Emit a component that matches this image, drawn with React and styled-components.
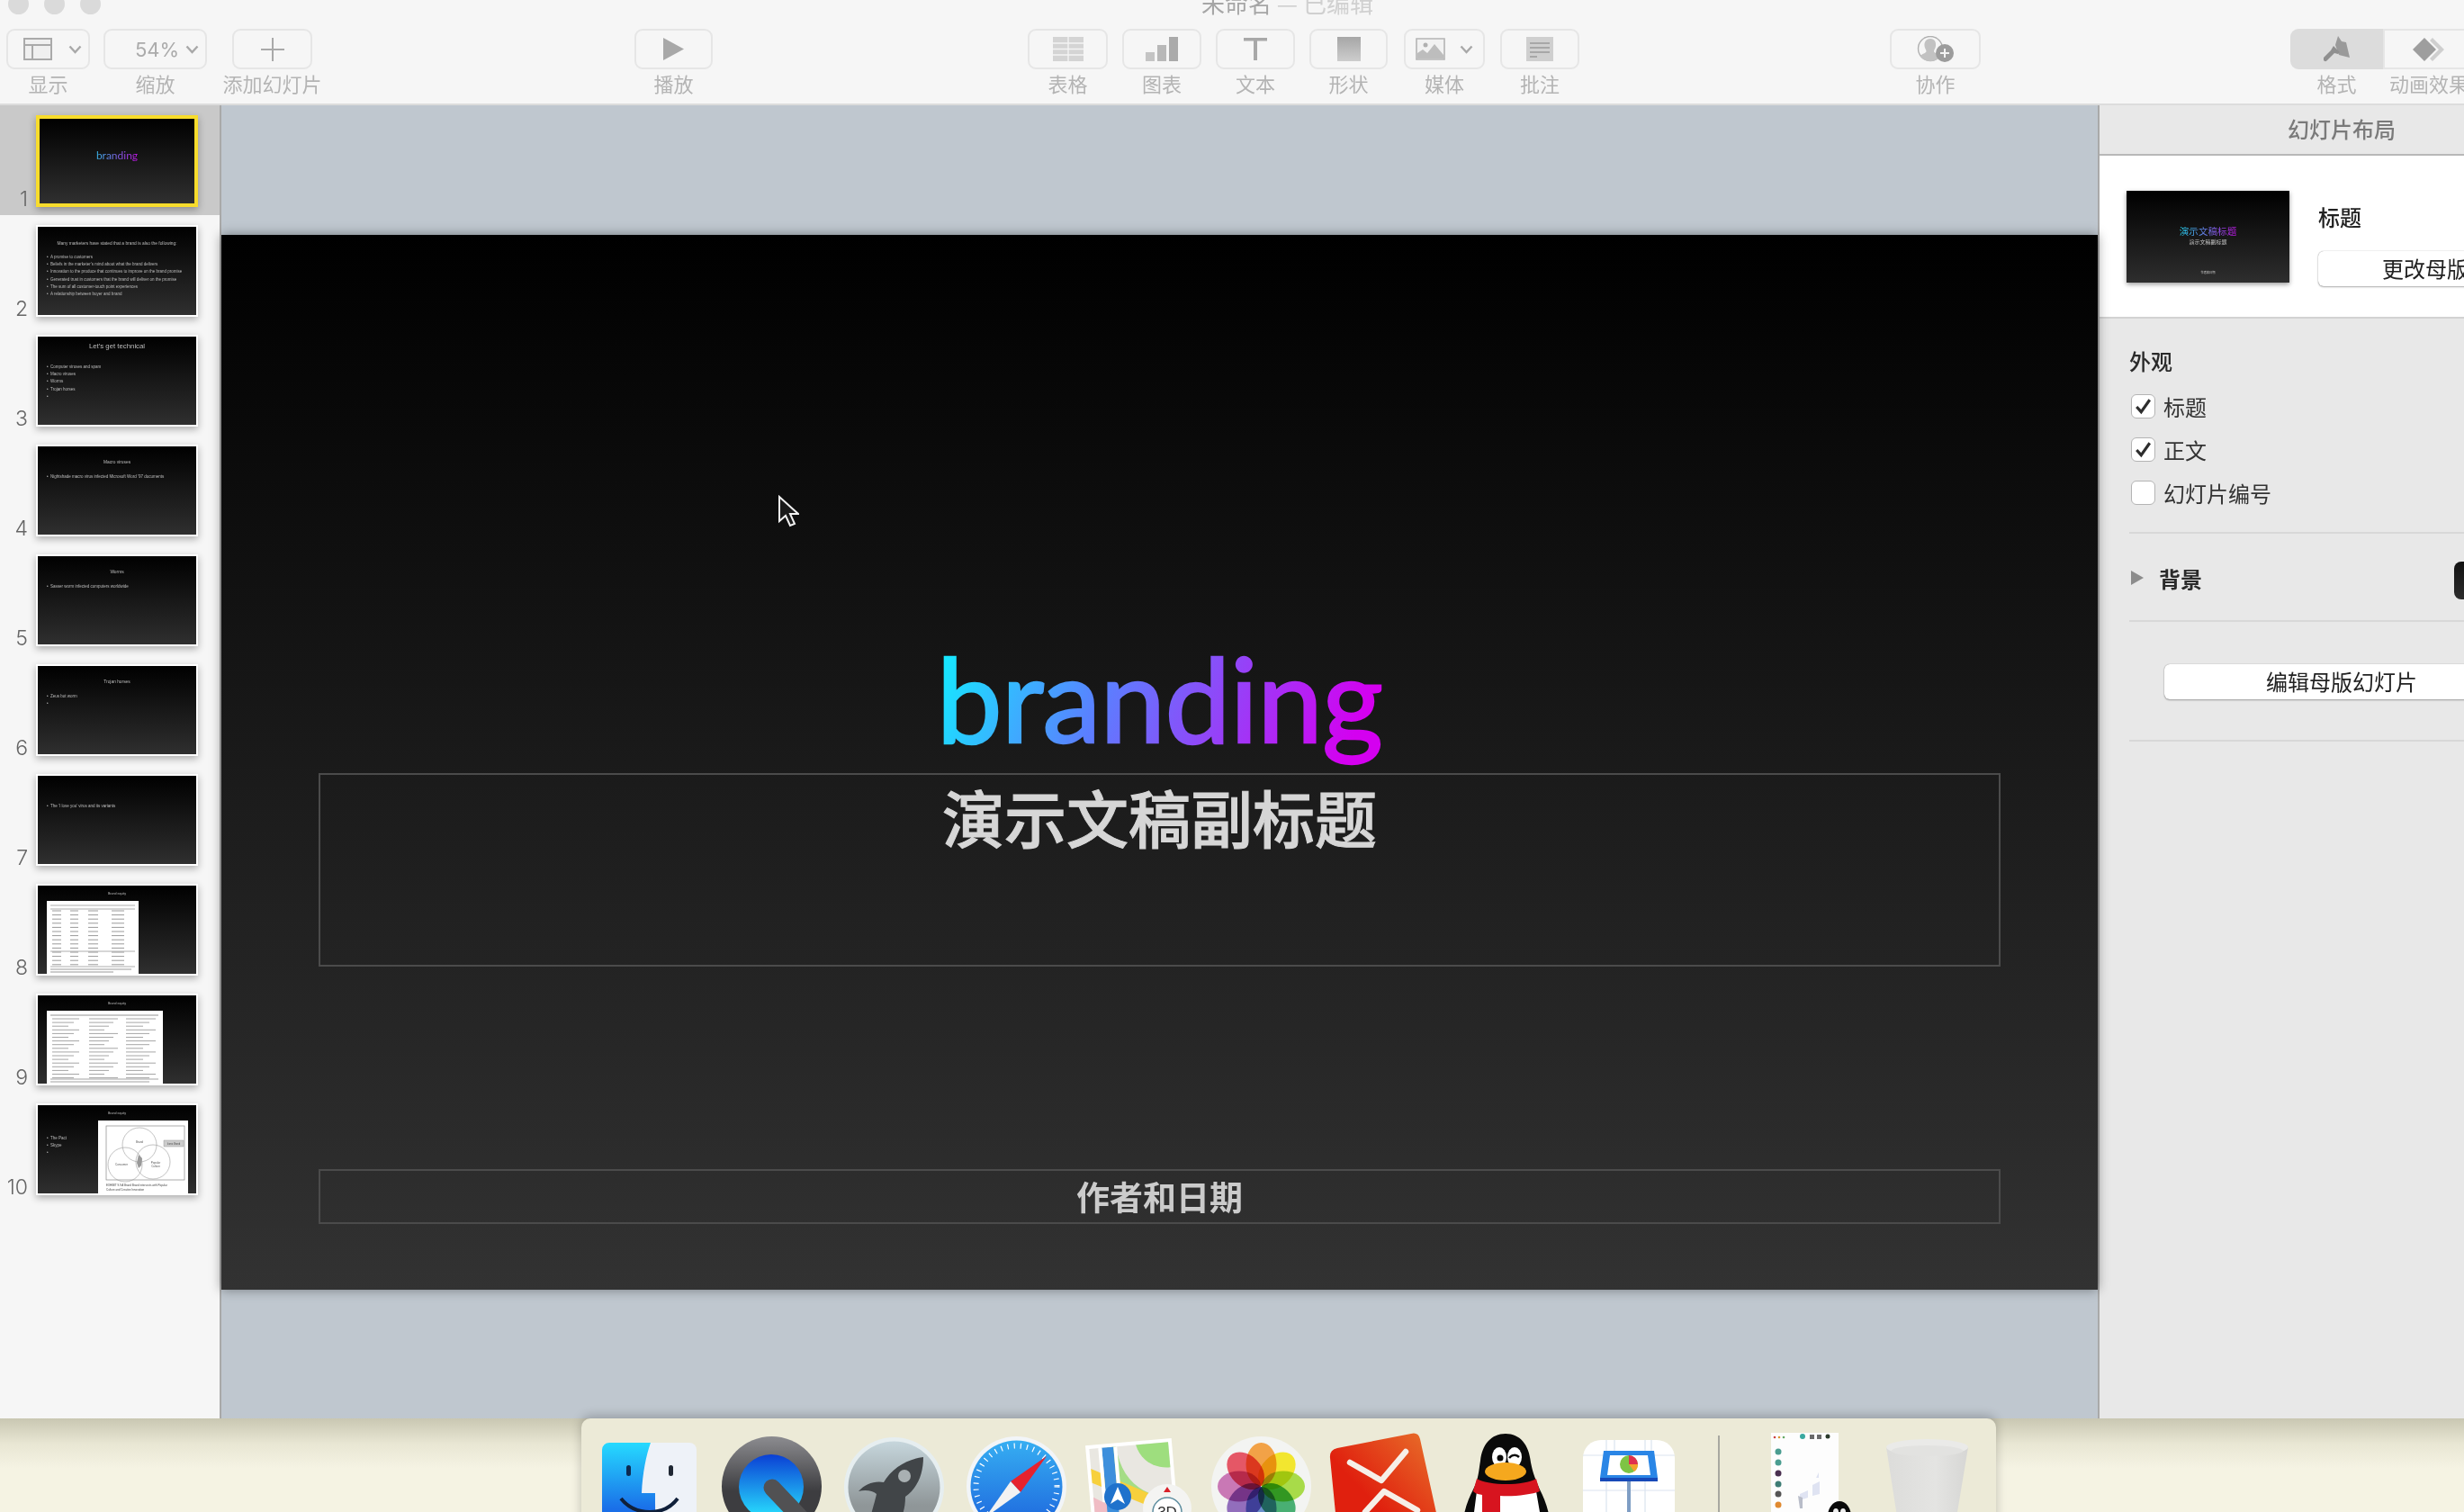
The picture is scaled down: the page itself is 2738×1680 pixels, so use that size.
import React from 'react';
import styled, {createGlobalStyle} from 'styled-components';

const CJK = '"Noto Sans CJK SC", "Liberation Sans", sans-serif';

const GlobalStyle = createGlobalStyle`
  html, body { margin: 0; padding: 0; background: #f4f2e2; }
  * { box-sizing: border-box; }
`;

const Screen = styled.div`
  width: 2738px;
  height: 1680px;
  overflow: hidden;
  font-family: ${CJK};
  display: flex;
  flex-direction: column;
`;

const Window = styled.div`
  height: 1576px;
  flex: none;
  display: flex;
  flex-direction: column;
  background: #f6f6f6;
`;

const TitleBar = styled.div`
  height: 32px;
  flex: none;
  position: relative;
  overflow: hidden;
  display: flex;
  align-items: flex-start;
  padding-left: 9px;
  gap: 17px;
`;

const Light = styled.span`
  width: 23px;
  height: 23px;
  margin-top: -7px;
  border-radius: 50%;
  background: #dadada;
`;

const DocTitle = styled.div`
  position: absolute;
  left: 1335px;
  top: -15px;
  font-size: 26px;
  line-height: 36px;
  white-space: nowrap;
  color: #a6a6a6;
  span { color: #d0d0d0; }
`;

const Toolbar = styled.div`
  height: 85px;
  flex: none;
  display: flex;
  align-items: flex-start;
  border-bottom: 2px solid #dcdcdc;
`;

const ToolItem = styled.div`
  width: ${p => p.$w}px;
  margin-left: ${p => p.$ml}px;
  flex: none;
  display: flex;
  flex-direction: column;
  align-items: center;
`;

const ToolButton = styled.div`
  width: 100%;
  height: 45px;
  border: 2px solid #e6e6e6;
  border-radius: 9px;
  padding-left: ${p => p.$pad || 0}px;
  display: flex;
  align-items: center;
  justify-content: center;
  gap: ${p => p.$gap || 0}px;
  color: #ababab;
  font-size: 22px;
  font-family: "Inter", "Liberation Sans", sans-serif;
`;

const SegButton = styled(ToolButton)`
  background: ${p => (p.$active ? '#dcdcdc' : 'transparent')};
  border-radius: ${p => (p.$active ? '9px 0 0 9px' : '0')};
  border-color: ${p => (p.$active ? '#dcdcdc' : '#e6e6e6')};
`;

const ToolLabel = styled.div`
  margin-top: 1px;
  font-size: 22px;
  line-height: 28px;
  color: #b4b4b4;
  white-space: nowrap;
`;

const Main = styled.div`
  flex: 1;
  min-height: 0;
  display: flex;
`;

const Sidebar = styled.div`
  width: 246px;
  flex: none;
  background: #f6f6f6;
  border-right: 2px solid #a9a9a9;
`;

const SlideRow = styled.div`
  height: 122px;
  padding-top: 11px;
  display: flex;
  align-items: flex-start;
  background: ${p => (p.$selected ? '#c9c9c9' : 'transparent')};
`;

const RowNumber = styled.div`
  width: 31px;
  height: 105px;
  flex: none;
  margin-right: 9px;
  display: flex;
  align-items: flex-end;
  justify-content: flex-end;
  font-family: "Inter", "Liberation Sans", sans-serif;
  font-weight: 300;
  font-size: 23px;
  line-height: 23px;
  color: #666;
`;

const Thumb = styled.div`
  width: 180px;
  height: 102px;
  flex: none;
  overflow: hidden;
  border: ${p => (p.$selected ? '4px solid #f8dc2c' : '2px solid #fff')};
  background: linear-gradient(#000, #2f2f2f);
  box-shadow: 0 3px 8px rgba(0, 0, 0, 0.3);
  font-family: "Liberation Sans", sans-serif;
  color: #bcbcbc;
  white-space: nowrap;
`;

const ThumbTitle = styled.div`
  height: 30px;
  padding-top: ${p => p.$top}px;
  text-align: center;
  font-size: ${p => p.$size}px;
  line-height: 10px;
`;

const ThumbBody = styled.div`
  display: flex;
  align-items: flex-start;
  justify-content: space-between;
`;

const Bullets = styled.div`
  padding: ${p => p.$top || 0}px 0 0 10px;
  font-size: 4.5px;
  line-height: 8.2px;
`;

const BulletLine = styled.div`
  display: flex;
  gap: 2.5px;
  height: 8.2px;
`;

const Picture = styled.svg`
  display: block;
  flex: none;
  margin-top: -13px;
  margin-left: ${p => p.$ml || 0}px;
  margin-right: ${p => p.$mr || 0}px;
  background: #fff;
`;

const BrandTiny = styled.div`
  padding-top: 33px;
  text-align: center;
  font-family: "Lato", sans-serif;
  font-size: 12px;
  line-height: 16px;
  span {
    background: linear-gradient(100deg, #34b8e8, #c010e0);
    -webkit-background-clip: text;
    background-clip: text;
    color: transparent;
  }
`;

const Canvas = styled.div`
  width: 2085px;
  flex: none;
  background: #bfc7cf;
  padding-top: 144px;
  position: relative;
`;

const Slide = styled.div`
  height: 1172px;
  padding: 448px 108px 0;
  display: flex;
  flex-direction: column;
  background: linear-gradient(#000 0%, #1a1a1a 50%, #323232 100%);
  box-shadow: 0 0 12px rgba(0, 0, 0, 0.4);
`;

const SlideTitle = styled.div`
  height: 150px;
  text-align: center;
  font-family: "Lato", sans-serif;
  font-weight: 400;
  font-size: 130px;
  line-height: 132px;
  letter-spacing: -0.6px;
  span {
    background: linear-gradient(112deg, #0ef4ff 0%, #5a80ff 38%, #d400f0 92%);
    -webkit-background-clip: text;
    background-clip: text;
    color: transparent;
    -webkit-text-stroke: 2.5px transparent;
  }
`;

const SubBox = styled.div`
  height: 215px;
  border: 2px solid #4b4b4b;
  text-align: center;
  color: #d6d6d6;
  font-weight: 500;
  -webkit-text-stroke: 1px #d6d6d6;
  font-size: 69px;
  line-height: 93px;
`;

const FooterBox = styled.div`
  height: 61px;
  margin-top: 225px;
  border: 2px solid #4b4b4b;
  text-align: center;
  color: #cbcbcb;
  font-weight: 700;
  font-size: 37px;
  line-height: 57px;
`;

const Cursor = styled.svg`
  position: absolute;
  left: 618px;
  top: 433px;
`;

const Inspector = styled.div`
  width: 540px;
  flex: none;
  background: #e8e8e8;
  border-left: 2px solid #a9a9a9;
  color: #2a2a2a;
  font-size: 24px;
`;

const InspectorHead = styled.div`
  height: 56px;
  border-bottom: 2px solid #b8b8b8;
  text-align: center;
  font-weight: 500;
  line-height: 52px;
  color: #7a7a7a;
`;

const LayoutCard = styled.div`
  height: 181px;
  padding: 39px 0 0 30px;
  background: #fff;
  display: flex;
  gap: 32px;
  border-bottom: 2px solid #d2d2d2;
`;

const LayoutThumb = styled.div`
  width: 181px;
  height: 102px;
  flex: none;
  background: linear-gradient(#000, #2e2e2e);
  box-shadow: 0 2px 5px rgba(0, 0, 0, 0.4);
  text-align: center;
  color: #c8c8c8;
  display: flex;
  flex-direction: column;
  align-items: center;
  padding-top: 37px;
`;

const LayoutName = styled.div`
  font-size: 10.6px;
  line-height: 15px;
  background: linear-gradient(100deg, #1ed8f0, #c010e0);
  -webkit-background-clip: text;
  background-clip: text;
  color: transparent;
`;

const LayoutSub = styled.div`
  font-size: 6px;
  line-height: 9px;
`;

const LayoutFoot = styled.div`
  margin-top: 27px;
  font-size: 3.2px;
  line-height: 6px;
`;

const LayoutInfo = styled.div`
  padding-top: 11px;
  font-weight: 500;
  line-height: 36px;
  color: #222;
`;

const WhiteButton = styled.div`
  width: ${p => p.$w}px;
  height: 39px;
  margin-top: ${p => p.$mt}px;
  margin-left: ${p => p.$ml || 0}px;
  background: #fff;
  border-radius: 6px;
  box-shadow: 0 0 1px rgba(0, 0, 0, 0.45), 0 1px 2px rgba(0, 0, 0, 0.3);
  text-align: center;
  font-weight: 400;
  line-height: 38px;
  color: #222;
`;

const Section = styled.div`
  margin-left: 33px;
  padding-top: ${p => p.$top || 0}px;
  height: ${p => p.$h}px;
  border-bottom: 2px solid #d8d8d8;
`;

const SectionTitle = styled.div`
  padding-top: 30px;
  font-weight: 500;
  line-height: 34px;
  margin-bottom: 20px;
`;

const CheckRow = styled.div`
  display: flex;
  align-items: center;
  height: 27px;
  margin: 0 0 21px 2px;
  gap: 9px;
  color: #333;
`;

const CheckBox = styled.span`
  width: 27px;
  height: 27px;
  background: #fff;
  border: 1px solid #b4b4b4;
  border-radius: 6px;
  display: flex;
  align-items: center;
  justify-content: center;
`;

const BackgroundRow = styled.div`
  display: flex;
  align-items: center;
  height: 36px;
  font-weight: 700;
  gap: 17px;
`;

const Triangle = styled.span`
  width: 0;
  height: 0;
  border-left: 14px solid #8c8c8c;
  border-top: 8px solid transparent;
  border-bottom: 8px solid transparent;
  margin-left: 2px;
`;

const Swatch = styled.span`
  width: 60px;
  height: 42px;
  margin: 6px 0 0 263px;
  flex: none;
  border-radius: 8px;
  background: linear-gradient(#111, #2c2c2c);
`;

const Desktop = styled.div`
  flex: 1;
  display: flex;
  align-items: stretch;
  padding-left: 646px;
  border-bottom: 2px solid #6a6a62;
  background: linear-gradient(#c9c7b2 0, #e8e6d3 28px, #f5f3e3 55px);
`;

const Dock = styled.div`
  width: 1572px;
  display: flex;
  align-items: flex-start;
  overflow: hidden;
  background: #ecead7;
  border-radius: 10px 10px 0 0;
  box-shadow: 0 -3px 12px rgba(0, 0, 0, 0.22);
  position: relative;
`;

const DockIcon = styled.svg`
  flex: none;
  display: block;
  overflow: visible;
  margin-left: ${p => p.$ml}px;
  margin-top: ${p => p.$mt}px;
`;

const DockDivider = styled.span`
  width: 2px;
  height: 90px;
  flex: none;
  margin: 19px 0 0 ${p => p.$ml}px;
  background: #a8a8a0;
`;

// toolbar drawings
const Chevron = () => (
  <svg width="15" height="10" viewBox="0 0 15 10">
    <path d="M1.5 1.5 L7.5 8 L13.5 1.5" fill="none" stroke="#a8a8a8" strokeWidth="2.4" />
  </svg>
);

const LayoutIcon = () => (
  <svg width="32" height="25" viewBox="0 0 32 25">
    <path d="M1 1h30v23H1zM1 8h30M10 8v16" fill="#f0f0f0" stroke="#aaa" strokeWidth="2" />
  </svg>
);

const PlusIcon = () => (
  <svg width="26" height="26" viewBox="0 0 26 26">
    <path d="M13 0v26M0 13h26" stroke="#a9a9a9" strokeWidth="2" />
  </svg>
);

const PlayIcon = () => (
  <svg width="24" height="25" viewBox="0 0 24 25">
    <path d="M0 0 L23 12.5 L0 25Z" fill="#a8a8a8" />
  </svg>
);

const TableIcon = () => (
  <svg width="34" height="27" viewBox="0 0 34 27">
    <path d="M0 0h34v27H0z" fill="#d4d4d4" />
    <path d="M17 0v27M0 7h34M0 13.5h34M0 20h34" stroke="#f4f4f4" strokeWidth="1.4" />
  </svg>
);

const ChartIcon = () => (
  <svg width="36" height="27" viewBox="0 0 36 27">
    <path d="M0 17h10v10H0z" fill="#c4c4c4" />
    <path d="M13 9h10v18H13z" fill="#b8b8b8" />
    <path d="M26 0h10v27H26z" fill="#aaa" />
  </svg>
);

const TextIcon = () => (
  <svg width="26" height="25" viewBox="0 0 26 25">
    <path d="M0 0h26v3.4H15v21.6h-4V3.4H0z" fill="#a8a8a8" />
  </svg>
);

const ShapeIcon = () => (
  <svg width="26" height="27" viewBox="0 0 26 27">
    <defs>
      <linearGradient id="shapeFill" x1="0" y1="0" x2="0" y2="1">
        <stop offset="0" stopColor="#a6a6a6" />
        <stop offset="1" stopColor="#cdcdcd" />
      </linearGradient>
    </defs>
    <path d="M0 0h26v27H0z" fill="url(#shapeFill)" />
  </svg>
);

const MediaIcon = () => (
  <svg width="33" height="25" viewBox="0 0 33 25">
    <path d="M1 1h31v23H1z" fill="#f2f2f2" stroke="#b4b4b4" strokeWidth="1.6" />
    <circle cx="11" cy="8" r="2.5" fill="#b0b0b0" />
    <path d="M2 23v-6l6-4 5 4 8-10 10 12v4z" fill="#bdbdbd" />
  </svg>
);

const CommentIcon = () => (
  <svg width="30" height="27" viewBox="0 0 30 27">
    <path d="M0 0h30v27H0z" fill="#cfcfcf" />
    <path d="M4 7h22M4 12h22M4 17h22M4 22h8" stroke="#9a9a9a" strokeWidth="1.6" />
  </svg>
);

const CollabIcon = () => (
  <svg width="42" height="29" viewBox="0 0 42 29">
    <circle cx="15" cy="14" r="13.5" fill="none" stroke="#b0b0b0" strokeWidth="1.4" />
    <path d="M15 3c5 0 6.5 4 6 8-.4 3-2 4.5-2 6 0 2 5 3 7 5 -2 4-6 6-11 6s-9-2-11.500-6c2-2 7-3 7-5 0-1.500-1.700-3-2-6-.4-4 1.500-8 6.500-8z" fill="#c2c2c2" />
    <circle cx="31" cy="19" r="10" fill="#9c9c9c" />
    <path d="M31 14v10M26 19h10" stroke="#f4f4f4" strokeWidth="2" />
  </svg>
);

const BrushIcon = () => (
  <svg width="30" height="29" viewBox="0 0 30 29">
    <path d="M16 0l4 6 5 1 4 17-12-3-4-11z" fill="#9a9a9a" />
    <path d="M11 11l7 7-2 2-4-1-8 8a2.500 2.500 0 0 1-4-3l8-8z" fill="#8f8f8f" />
  </svg>
);

const DiamondIcon = () => (
  <svg width="36" height="26" viewBox="0 0 36 26">
    <path d="M13 0l13 13-13 13L0 13z" fill="#9e9e9e" />
    <path d="M22 0l13 13-13 13-3-3 10-10-10-10z" fill="#cfcfcf" />
  </svg>
);

const CheckMark = () => (
  <svg width="19" height="19" viewBox="0 0 17 17">
    <path d="M2 9l4.500 5L15 2" fill="none" stroke="#2d2d2d" strokeWidth="2.800" />
  </svg>
);

// pictures pasted on slides 8, 9 and 10
const TablePicture = () => {
  const rows = Array.from({length: 14}, (_, i) => 11 + i * 4.6);
  return (
    <Picture $ml={10} width="102" height="83" viewBox="0 0 102 83">
      <path d="M4 5h94M4 9h94M4 56h94M4 73h94" stroke="#777" strokeWidth="0.6" />
      {rows.map(y => (
        <g key={y} stroke="#9a9a9a" strokeWidth="1">
          <path d={`M6 ${y}h10M26 ${y}h9M46 ${y}h11M72 ${y}h14`} />
        </g>
      ))}
      <path d="M4 76h90M4 79h70" stroke="#999" strokeWidth="1" />
    </Picture>
  );
};

const ColumnsPicture = () => {
  const rows = Array.from({length: 17}, (_, i) => 9 + i * 4.1);
  return (
    <Picture $ml={10} width="129" height="83" viewBox="0 0 129 83">
      <path d="M4 5h120" stroke="#777" strokeWidth="0.8" />
      {rows.map((y, i) => (
        <path key={y} d={`M6 ${y}h${30 - (i % 3) * 6}M47 ${y}h${32 - (i % 4) * 5}M88 ${y}h${33 - (i % 3) * 7}`} stroke="#a6a6a6" strokeWidth="1" />
      ))}
      <path d="M4 76h120M4 79h110" stroke="#999" strokeWidth="0.9" />
    </Picture>
  );
};

const VennPicture = () => (
  <Picture $mr={9} width="100" height="83" viewBox="0 0 100 83">
    <rect x="9" y="6" width="87" height="60" fill="#fff" stroke="#888" strokeWidth="0.7" />
    <g fill="none" stroke="#999" strokeWidth="0.6">
      <circle cx="46" cy="27" r="19" />
      <circle cx="30" cy="49" r="19" />
      <circle cx="61" cy="46" r="19" />
    </g>
    <path d="M45 38l4 4-1 8-3 3-2-6z" fill="#999" />
    <path d="M73 22h22v7H73z" fill="#ccc" stroke="#999" strokeWidth="0.5" />
    <text x="46" y="25" fontSize="3" textAnchor="middle" fill="#555">Brand</text>
    <text x="26" y="50" fontSize="3" textAnchor="middle" fill="#555">Consumer</text>
    <text x="64" y="48" fontSize="3" textAnchor="middle" fill="#555">Popular</text>
    <text x="64" y="52" fontSize="3" textAnchor="middle" fill="#555">Culture</text>
    <text x="84" y="27" fontSize="2.600" textAnchor="middle" fill="#444">Iconic Brand</text>
    <text x="9" y="73" fontSize="3" fill="#444">EXHIBIT 9.9  A Brand Brand intersects with Popular</text>
    <text x="9" y="77.500" fontSize="3" fill="#444">Culture and Creative Innovation</text>
  </Picture>
);

// dock drawings
const FinderIcon = () => (
  <DockIcon $ml={23} $mt={27} width="105" height="105" viewBox="0 0 105 105">
    <defs>
      <linearGradient id="finderBlue" x1="0" y1="0" x2="0" y2="1">
        <stop offset="0" stopColor="#26daff" />
        <stop offset="0.7" stopColor="#1a6fe8" />
      </linearGradient>
    </defs>
    <rect width="105" height="105" rx="8" fill="#eef2f8" />
    <path d="M8 0h46c-5 14-9 34-10 56h15c0 14 0 34 2 49H8a8 8 0 0 1-8-8V8a8 8 0 0 1 8-8z" fill="url(#finderBlue)" />
    <rect x="27" y="25" width="5" height="12" rx="2.500" fill="#0d2a50" />
    <rect x="74" y="25" width="5" height="12" rx="2.500" fill="#1f2733" />
    <path d="M21 62c16 20 48 20 63 0" fill="none" stroke="#10203a" strokeWidth="4" />
  </DockIcon>
);

const QuickTimeIcon = () => (
  <DockIcon $ml={28} $mt={20} width="111" height="111" viewBox="0 0 111 111">
    <defs>
      <linearGradient id="qtRing" x1="0" y1="0" x2="0" y2="1">
        <stop offset="0" stopColor="#8c8c90" />
        <stop offset="0.55" stopColor="#3d3d40" />
      </linearGradient>
      <linearGradient id="qtBlue" x1="0" y1="0" x2="0" y2="1">
        <stop offset="0" stopColor="#0b3fd4" />
        <stop offset="0.9" stopColor="#26d4fb" />
      </linearGradient>
    </defs>
    <circle cx="55.500" cy="55.500" r="55.500" fill="url(#qtRing)" />
    <circle cx="55" cy="56" r="36" fill="url(#qtBlue)" />
    <path d="M56 57l36 38" stroke="#515153" strokeWidth="19" strokeLinecap="round" />
  </DockIcon>
);

const LaunchpadIcon = () => (
  <DockIcon $ml={25} $mt={21} width="111" height="111" viewBox="0 0 111 111">
    <defs>
      <linearGradient id="lpFill" x1="0" y1="0" x2="0" y2="1">
        <stop offset="0" stopColor="#c6d6dc" />
        <stop offset="0.7" stopColor="#8f9698" />
      </linearGradient>
    </defs>
    <circle cx="55.500" cy="55.500" r="55.500" fill="#e6eef0" />
    <circle cx="55.500" cy="55.500" r="51" fill="url(#lpFill)" />
    <path d="M88 22c-17 2-35 12-44 28-10-2-21 2-28 10 7-2 16-1 20 3 -2 9-4 15-8 30 8-4 14-8 20-10 4 7 6 12 10 17 4-8 10-16 10-34 14-10 20-26 20-44z" fill="#414548" />
    <circle cx="67" cy="43" r="7" fill="#a9b0b2" />
  </DockIcon>
);

const SafariIcon = () => (
  <DockIcon $ml={25} $mt={20} width="111" height="111" viewBox="0 0 111 111">
    <defs>
      <linearGradient id="safariBlue" x1="0" y1="0" x2="0" y2="1">
        <stop offset="0" stopColor="#36aef2" />
        <stop offset="1" stopColor="#1c62dc" />
      </linearGradient>
    </defs>
    <circle cx="55.500" cy="55.500" r="55.500" fill="#f2f5f8" />
    <circle cx="55.500" cy="55.500" r="51" fill="url(#safariBlue)" />
    <circle cx="55.500" cy="55.500" r="45" fill="none" stroke="#fff" strokeWidth="6" strokeDasharray="1.200 6" />
    <path d="M89 22L49 50l11 12z" fill="#e6222e" />
    <path d="M21 90L49 50l11 12z" fill="#f2f2f2" />
  </DockIcon>
);

const MapsIcon = () => (
  <DockIcon $ml={23} $mt={24} width="117" height="110" viewBox="0 0 117 110">
    <g transform="rotate(-5 50 50)">
      <rect x="2" y="2" width="96" height="106" fill="#fff" />
      <rect x="6" y="6" width="88" height="98" fill="#e9e7e1" />
      <path d="M58 6h36v28C76 34 62 24 58 6z" fill="#9ede7e" />
      <path d="M36 6c2 30 16 50 44 60v10C46 66 28 40 26 6z" fill="#a5dd86" />
      <path d="M6 28l94 50v14L6 44z" fill="#f7d03c" />
      <path d="M6 60l26 16v28H6z" fill="#f0bcc4" />
      <path d="M20 6h13v80H20z" fill="#3d8fdc" />
      <path d="M16 6h4v60h-4zM33 6h4v60h-4z" fill="#fff" />
    </g>
    <circle cx="34" cy="63" r="15" fill="#1f72cc" />
    <path d="M34 52l8 19-8-5-8 5z" fill="#fff" />
    <circle cx="89" cy="76" r="27" fill="#f4f4f2" />
    <circle cx="89" cy="80" r="16" fill="#fff" stroke="#5f8ea0" strokeWidth="1.500" />
    <path d="M89 52l4 6h-8z" fill="#d9202a" />
    <text x="89" y="86" fontSize="17" fontFamily="Liberation Sans, sans-serif" textAnchor="middle" fill="#333">3D</text>
  </DockIcon>
);

const PhotosIcon = () => {
  const petals = ['#f29a38', '#f2e41e', '#a2d83a', '#3aa868', '#5f86c8', '#8a62b8', '#c66cb0', '#e4485a'];
  return (
    <DockIcon $ml={21} $mt={20} width="111" height="111" viewBox="0 0 111 111">
      <circle cx="55.500" cy="55.500" r="55.500" fill="#f3f4f2" />
      <g style={{isolation: 'isolate'}}>
        {petals.map((color, i) => (
          <ellipse
            key={color}
            cx="55.500"
            cy="31"
            rx="17"
            ry="24"
            fill={color}
            opacity="0.92"
            style={{mixBlendMode: 'multiply'}}
            transform={`rotate(${i * 45} 55.500 55.500)`}
          />
        ))}
      </g>
    </DockIcon>
  );
};

const WpsIcon = () => (
  <DockIcon $ml={21} $mt={16} width="122" height="130" viewBox="0 0 122 130">
    <defs>
      <linearGradient id="wpsRed" x1="0" y1="1" x2="1" y2="0">
        <stop offset="0.4" stopColor="#e0200e" />
        <stop offset="1" stopColor="#e8752c" />
      </linearGradient>
    </defs>
    <path d="M0 28q-1-9 8-11L90 1q8-2 10 6l22 100-112 23z" fill="url(#wpsRed)" />
    <path d="M22 33l35 20 27-32M39 88l21-23 37 21" fill="none" stroke="#f6efe8" strokeWidth="6.500" strokeLinecap="round" strokeLinejoin="round" />
  </DockIcon>
);

const QQIcon = () => (
  <DockIcon $ml={25} $mt={17} width="98" height="110" viewBox="0 0 98 110">
    <path d="M48 0c16 0 26 12 28 32 2 10 4 16 10 30 6 12 12 26 12 48H0c0-22 6-36 12-48C18 50 18 42 20 30 22 12 32 0 48 0z" fill="#0a0a0a" />
    <path d="M16 64c10 4 54 4 66 0l8 46H10z" fill="#fff" />
    <ellipse cx="41" cy="26" rx="8" ry="11" fill="#fff" />
    <ellipse cx="58" cy="26" rx="8" ry="11" fill="#fff" />
    <circle cx="42" cy="27" r="3.500" fill="#0a0a0a" />
    <path d="M52 27c3-4 8-4 11-1" fill="none" stroke="#0a0a0a" strokeWidth="2.500" />
    <ellipse cx="48" cy="42" rx="23" ry="10" fill="#f5a81e" />
    <path d="M16 50c14 8 52 8 66 0l4 14c-10 4-30 6-44 5v25H22V68c-6-1-8-2-10-4z" fill="#d7141f" />
  </DockIcon>
);

const KeynoteIcon = () => (
  <DockIcon $ml={36} $mt={24} width="102" height="102" viewBox="0 0 102 102">
    <rect width="102" height="102" rx="20" fill="#fff" />
    <path d="M0 17h102M0 56h102M26 0v102M69 0v102M35 0v12M76 0v12" stroke="#dbe4ef" strokeWidth="1.200" fill="none" />
    <path d="M23 12h56l4 30H19z" fill="#2a86e6" />
    <path d="M30 17h42l3 22H27z" fill="#fff" />
    <path d="M19 42h64v4H19z" fill="#1749b8" />
    <circle cx="51" cy="27" r="10" fill="#7ec444" />
    <path d="M51 17a10 10 0 0 1 10 10h-10z" fill="#e0304e" />
    <path d="M61 27a10 10 0 0 1-4 8l-6-8z" fill="#f3a32a" />
    <path d="M49 46h4v56h-4z" fill="#7f9ec4" />
  </DockIcon>
);

const DocIcon = () => (
  <DockIcon $ml={57} $mt={16} width="90" height="90" viewBox="0 0 90 90">
    <rect width="75" height="90" fill="#fdfdfd" />
    <circle cx="4" cy="5" r="1.300" fill="#c44" />
    <circle cx="9" cy="5" r="1.300" fill="#d93" />
    <circle cx="14" cy="5" r="1.300" fill="#6a6" />
    <circle cx="35" cy="4" r="3" fill="#3aa9a0" />
    <path d="M43 2h5v5h-5zM51 2h5v5h-5z" fill="#6a6a6a" />
    <circle cx="63" cy="4" r="2.500" fill="#2a3a2a" />
    {[['#4a9d90', 21], ['#4a9d90', 33], ['#4a3050', 45], ['#3f7d75', 57], ['#555', 68], ['#e08a30', 80]].map(([color, y]) => (
      <circle key={y} cx="8" cy={y} r="3.500" fill={color} />
    ))}
    <path d="M32 68l9-4v8l-9 3zM46 58l8-4v14l-8 2zM50 50l3-6v6z" fill="#dfe3f2" />
    <path d="M30 70l5 2v12h-3z" fill="#b9bdc9" />
    <ellipse cx="76" cy="93" rx="13" ry="17" fill="#0a0a0a" />
    <ellipse cx="72" cy="88" rx="3" ry="4" fill="#eee" />
    <ellipse cx="80" cy="88" rx="3" ry="4" fill="#eee" />
  </DockIcon>
);

const TrashIcon = () => (
  <DockIcon $ml={38} $mt={22} width="91" height="100" viewBox="0 0 91 100">
    <defs>
      <linearGradient id="trashFill" x1="0" y1="0" x2="1" y2="0">
        <stop offset="0" stopColor="#dcdcda" />
        <stop offset="0.6" stopColor="#e4e4e2" />
        <stop offset="1" stopColor="#d6d6d4" />
      </linearGradient>
    </defs>
    <path d="M0 10l14 90h62l15-90z" fill="url(#trashFill)" />
    <ellipse cx="45.500" cy="10" rx="45.500" ry="9" fill="#eaeae8" />
    <ellipse cx="45.500" cy="14" rx="40" ry="6" fill="#e2e2e0" />
  </DockIcon>
);

const slides = [
  {title: 'Many marketers have stated that a brand is also the following:', size: 4.85, top: 14,
    items: [
      'A promise to customers',
      "Beliefs in the marketer's mind about what the brand delivers",
      'Innovation to the produce that continues to improve on the brand promise',
      'Generated trust in customers that the brand will deliver on the promise',
      'The sum of all customer-touch point experiences',
      'A relationship between buyer and brand',
    ]},
  {title: "Let's get technical", size: 7.8, top: 6,
    items: ['Computer viruses and spam', 'Macro viruses', 'Worms', 'Trojan horses', '']},
  {title: 'Macro viruses', size: 4.85, top: 13,
    items: ["Nightshade macro virus infected Microsoft Word '97 documents"]},
  {title: 'Worms', size: 4.85, top: 13, items: ['Sasser worm infected computers worldwide']},
  {title: 'Trojan horses', size: 4.85, top: 13, items: ['Zeus bot worm', '']},
  {title: '', size: 4.85, top: 13, items: ["The 'I love you' virus and its variants"]},
  {title: 'Brand equity', size: 3.6, top: 4, picture: <TablePicture />},
  {title: 'Brand equity', size: 3.6, top: 4, picture: <ColumnsPicture />},
  {title: 'Brand equity', size: 3.6, top: 4, items: ['The Pact', 'Skype', ''], bulletTop: 3, picture: <VennPicture />},
];

const ThumbSlide = ({slide}) => (
  <Thumb>
    <ThumbTitle $top={slide.top} $size={slide.size}>{slide.title}</ThumbTitle>
    <ThumbBody>
      {slide.items && (
        <Bullets $top={slide.bulletTop}>
          {slide.items.map((item, i) => <BulletLine key={i}><span>•</span><span>{item}</span></BulletLine>)}
        </Bullets>
      )}
      {slide.picture}
    </ThumbBody>
  </Thumb>
);

const Tool = ({w, ml, label, gap, pad, children}) => (
  <ToolItem $w={w} $ml={ml}>
    <ToolButton $gap={gap} $pad={pad}>{children}</ToolButton>
    <ToolLabel>{label}</ToolLabel>
  </ToolItem>
);

const App = () => (
  <Screen>
    <GlobalStyle />
    <Window>
      <TitleBar>
        <Light /><Light /><Light />
        <DocTitle>未命名 <span>— 已编辑</span></DocTitle>
      </TitleBar>
      <Toolbar>
        <Tool w={93} ml={7} label="显示" gap={18} pad={9}><LayoutIcon /><Chevron /></Tool>
        <Tool w={115} ml={15} label="缩放" gap={7} pad={26}>54%<Chevron /></Tool>
        <Tool w={89} ml={28} label="添加幻灯片"><PlusIcon /></Tool>
        <Tool w={87} ml={358} label="播放"><PlayIcon /></Tool>
        <Tool w={89} ml={350} label="表格"><TableIcon /></Tool>
        <Tool w={88} ml={16} label="图表"><ChartIcon /></Tool>
        <Tool w={88} ml={16} label="文本"><TextIcon /></Tool>
        <Tool w={87} ml={16} label="形状"><ShapeIcon /></Tool>
        <Tool w={90} ml={18} label="媒体" gap={16}><MediaIcon /><Chevron /></Tool>
        <Tool w={88} ml={17} label="批注"><CommentIcon /></Tool>
        <Tool w={101} ml={345} label="协作"><CollabIcon /></Tool>
        <ToolItem $w={103} $ml={344}>
          <SegButton $active><BrushIcon /></SegButton>
          <ToolLabel>格式</ToolLabel>
        </ToolItem>
        <ToolItem $w={102} $ml={0}>
          <SegButton><DiamondIcon /></SegButton>
          <ToolLabel>动画效果</ToolLabel>
        </ToolItem>
      </Toolbar>
      <Main>
        <Sidebar>
          <SlideRow $selected>
            <RowNumber>1</RowNumber>
            <Thumb $selected>
              <BrandTiny><span>branding</span></BrandTiny>
            </Thumb>
          </SlideRow>
          {slides.map((slide, i) => (
            <SlideRow key={i}>
              <RowNumber>{i + 2}</RowNumber>
              <ThumbSlide slide={slide} />
            </SlideRow>
          ))}
        </Sidebar>
        <Canvas>
          <Slide>
            <SlideTitle><span>branding</span></SlideTitle>
            <SubBox>演示文稿副标题</SubBox>
            <FooterBox>作者和日期</FooterBox>
          </Slide>
          <Cursor width="24" height="36" viewBox="0 0 24 36">
            <path d="M2 2v27l7-6 5 11 5-2-5-11h9z" fill="#1a1a1a" stroke="#f0f0f0" strokeWidth="2" />
          </Cursor>
        </Canvas>
        <Inspector>
          <InspectorHead>幻灯片布局</InspectorHead>
          <LayoutCard>
            <LayoutThumb>
              <LayoutName>演示文稿标题</LayoutName>
              <LayoutSub>演示文稿副标题</LayoutSub>
              <LayoutFoot>作者和日期</LayoutFoot>
            </LayoutThumb>
            <LayoutInfo>
              标题
              <WhiteButton $w={238} $mt={20}>更改母版</WhiteButton>
            </LayoutInfo>
          </LayoutCard>
          <Section $h={239}>
            <SectionTitle>外观</SectionTitle>
            <CheckRow><CheckBox><CheckMark /></CheckBox>标题</CheckRow>
            <CheckRow><CheckBox><CheckMark /></CheckBox>正文</CheckRow>
            <CheckRow><CheckBox />幻灯片编号</CheckRow>
          </Section>
          <Section $h={98} $top={31}>
            <BackgroundRow>
              <Triangle />
              背景
              <Swatch />
            </BackgroundRow>
          </Section>
          <Section $h={133} $top={47}>
            <WhiteButton $w={394} $mt={0} $ml={39}>编辑母版幻灯片</WhiteButton>
          </Section>
        </Inspector>
      </Main>
    </Window>
    <Desktop>
      <Dock>
        <FinderIcon />
        <QuickTimeIcon />
        <LaunchpadIcon />
        <SafariIcon />
        <MapsIcon />
        <PhotosIcon />
        <WpsIcon />
        <QQIcon />
        <KeynoteIcon />
        <DockDivider $ml={48} />
        <DocIcon />
        <TrashIcon />
      </Dock>
    </Desktop>
  </Screen>
);

export default App;
